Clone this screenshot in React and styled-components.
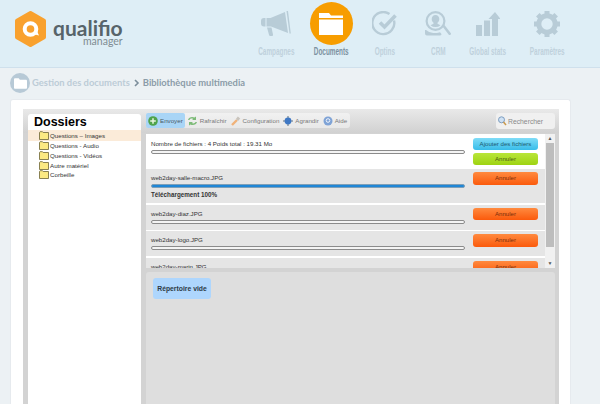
import styled, { createGlobalStyle } from "styled-components";

const GlobalStyle = createGlobalStyle`
  html, body { margin: 0; padding: 0; background: #ecf1f4; }
  body { width: 600px; height: 404px; overflow: hidden; font-family: "Liberation Sans", Arial, sans-serif; }
`;

const navItems = [
  { label: "Campagnes", width: 66, icon: <Megaphone /> },
  { label: "Documents", width: 44, active: true, icon: <FolderBig /> },
  { label: "Optins", width: 64, icon: <CheckRound /> },
  { label: "CRM", width: 42, icon: <PersonSearch /> },
  { label: "Global stats", width: 58, icon: <Stats /> },
  { label: "Paramètres", width: 60, icon: <Gear /> },
];

const folders = ["Questions – Images", "Questions - Audio", "Questions - Vidéos", "Autre matériel", "Corbeille"];

const uploads = [
  { name: "web2day-diaz.JPG" },
  { name: "web2day-logo.JPG" },
  { name: "web2day-marin.JPG" },
];

export default function App() {
  return (
    <Page>
      <GlobalStyle />
      <Header>
        <Logo />
        <Nav>
          {navItems.map((item) => (
            <NavItem key={item.label} $width={item.width}>
              <NavIcon $active={item.active}>{item.icon}</NavIcon>
              <NavLabel $active={item.active}>{item.label}</NavLabel>
            </NavItem>
          ))}
        </Nav>
      </Header>

      <Breadcrumb>
        <CrumbBadge>
          <svg width="13" height="11" viewBox="0 0 13 11">
            <path d="M0 1.500C0 .7.5.3 1.200.3h3.500l1.200 1.400h5.900c.7 0 1.200.4 1.200 1.100v6.900c0 .7-.5 1.100-1.200 1.100H1.200C.5 10.800 0 10.400 0 9.700z" fill="#fff" />
          </svg>
        </CrumbBadge>
        <CrumbLink>Gestion des documents</CrumbLink>
        <CrumbArrow>
          <svg width="6" height="8" viewBox="0 0 6 8" fill="none">
            <path d="M1 1l3 3-3 3" stroke="#7c8e9b" strokeWidth="1.600" />
          </svg>
        </CrumbArrow>
        <CrumbCurrent>Bibliothèque multimedia</CrumbCurrent>
      </Breadcrumb>

      <Card>
        <Manager>
          <Sidebar>
            <SidebarTitle>Dossiers</SidebarTitle>
            {folders.map((name, i) => (
              <TreeRow key={name} $selected={i === 0}>
                <SmallFolder />
                {name}
              </TreeRow>
            ))}
          </Sidebar>

          <Content>
            <Toolbar>
              <ToolGroup>
                <ToolButton $active><PlusIcon />Envoyer</ToolButton>
                <ToolButton><RefreshIcon />Rafraîchir</ToolButton>
                <ToolButton><ToolIcon />Configuration</ToolButton>
                <ToolButton><GlobeIcon />Agrandir</ToolButton>
                <ToolButton><HelpIcon />Aide</ToolButton>
              </ToolGroup>
              <SearchBox><LensIcon />Rechercher</SearchBox>
            </Toolbar>

            <UploadPanel>
              <UploadList>
                <SummaryRow>
                  <RowMain>
                    <FileName>Nombre de fichiers : 4 Poids total : 19.31 Mo</FileName>
                    <Progress />
                  </RowMain>
                  <RowActions>
                    <ActionButton $kind="blue">Ajouter des fichiers</ActionButton>
                    <ActionButton $kind="green">Annuler</ActionButton>
                  </RowActions>
                </SummaryRow>
                <DoneRow>
                  <RowMain>
                    <FileName>web2day-salle-macro.JPG</FileName>
                    <Progress $value={100} />
                    <DoneText>Téléchargement 100%</DoneText>
                  </RowMain>
                  <RowActions>
                    <ActionButton $kind="orange">Annuler</ActionButton>
                  </RowActions>
                </DoneRow>
                {uploads.map((file) => (
                  <FileRow key={file.name}>
                    <RowMain>
                      <FileName>{file.name}</FileName>
                      <Progress />
                    </RowMain>
                    <RowActions>
                      <ActionButton $kind="orange">Annuler</ActionButton>
                    </RowActions>
                  </FileRow>
                ))}
              </UploadList>
              <Scrollbar>
                <ScrollArrow>▲</ScrollArrow>
                <ScrollThumb />
                <ScrollArrow>▼</ScrollArrow>
              </Scrollbar>
            </UploadPanel>

            <Drop>
              <EmptyNote>Répertoire vide</EmptyNote>
            </Drop>
          </Content>
        </Manager>
      </Card>
    </Page>
  );
}

function Logo() {
  return (
    <LogoWrap>
      <svg width="33" height="38" viewBox="0 0 33 38">
        <path d="M16.500 3 30 10.800v16.400L16.500 35 3 27.200V10.800z" fill="#f9a12e" stroke="#f9a12e" strokeWidth="4" strokeLinejoin="round" />
        <circle cx="16.500" cy="19" r="5.800" fill="none" stroke="#fff" strokeWidth="4" />
        <path d="M19 24l6 1.500-2.500-5.500z" fill="#fff" />
      </svg>
      <LogoText>
        <LogoName>qualifio</LogoName>
        <LogoSub>manager</LogoSub>
      </LogoText>
    </LogoWrap>
  );
}

function Megaphone() {
  return (
    <svg width="30" height="26" viewBox="0 0 30 26" fill="#b8ccd7">
      <path d="M0 10c0-2 1-3 3-3h1.500v8.500H3c-2 0-3-1-3-3z" />
      <path d="M5.500 7h4L24 1l3 21-17-6.500H5.500z" />
      <path d="M6 16.500h4.500L12 23.500c.2 1-.5 1.500-1.300 1.500H9.500c-.8 0-1.300-.5-1.500-1.300z" />
      <path d="M25.500 0H27l2.800 22.500h-1.300z" />
    </svg>
  );
}

function FolderBig() {
  return (
    <svg width="24" height="24" viewBox="0 0 24 24">
      <path d="M0 1h10l2 2.500h12V6H0z" fill="#fff" />
      <path d="M0 7.500h24V23H0z" fill="#fff" />
    </svg>
  );
}

function CheckRound() {
  return (
    <svg width="26" height="26" viewBox="0 0 26 26" fill="none">
      <path d="M22 9.500A11 11 0 1 1 17.500 3" stroke="#b8ccd7" strokeWidth="2.400" />
      <path d="M8 11.500l4.500 4.500L23.500 4.500" stroke="#b8ccd7" strokeWidth="3.600" />
    </svg>
  );
}

function PersonSearch() {
  return (
    <svg width="26" height="26" viewBox="0 0 26 26" fill="#b8ccd7">
      <path d="M10.500 0a10 10 0 1 0 0 20 10 10 0 0 0 0-20zm0 2.200a7.800 7.800 0 1 1 0 15.600 7.800 7.800 0 0 1 0-15.600z" />
      <path d="M10.500 4c2.400 0 3.800 1.800 3.800 4 0 1.600-.8 3-1.800 3.800v1l3 1.400a7.500 7.500 0 0 1-10 0l3-1.400v-1C7.500 11 6.700 9.600 6.700 8c0-2.200 1.400-4 3.800-4z" />
      <path d="M17.500 15.500l2-1.500 6.200 8c.5.700.4 1.300-.3 1.800-.7.500-1.300.4-1.800-.2z" />
      <path d="M0 19c1 0 2 .3 2.500 1 2 1.500 5 2 8 2 2 0 3.500-.3 4.500-.8l1.500 1.800c0 1-1 1.500-2.500 1.500H2c-1.500 0-2-1-2-2.500z" />
    </svg>
  );
}

function Stats() {
  return (
    <svg width="24" height="24" viewBox="0 0 24 24" fill="#b8ccd7">
      <path d="M0 13h6v11H0z" />
      <path d="M8 8.500h6V24H8z" />
      <path d="M16 24V7h-3.500L19 0l5.500 7H22v17z" />
    </svg>
  );
}

function Gear() {
  return (
    <svg width="26" height="26" viewBox="0 0 26 26" fill="none">
      <circle cx="13" cy="13" r="8.200" stroke="#b8ccd7" strokeWidth="5" />
      <g stroke="#b8ccd7" strokeWidth="5">
        <path d="M13 0v4M13 22v4M0 13h4M22 13h4M3.800 3.800l2.800 2.800M19.400 19.400l2.800 2.800M3.800 22.200l2.800-2.800M19.400 6.600l2.800-2.800" />
      </g>
    </svg>
  );
}

function SmallFolder() {
  return (
    <TreeIcon width="10" height="9" viewBox="0 0 10 9">
      <path d="M.5 8.500v-7l.6-.8h2.400l.7.8h5.300v7z" fill="#fbe983" stroke="#6b6336" strokeWidth=".8" />
    </TreeIcon>
  );
}

function PlusIcon() {
  return (
    <svg width="10" height="10" viewBox="0 0 10 10">
      <circle cx="5" cy="5" r="4.800" fill="#4fa34c" />
      <path d="M5 2.200v5.600M2.200 5h5.600" stroke="#e9f5e0" strokeWidth="1.500" />
    </svg>
  );
}

function RefreshIcon() {
  return (
    <svg width="11" height="10" viewBox="0 0 11 10" fill="#7dbb78">
      <path d="M1 4c.5-2.500 4-4 6.500-2.500L9 .5v3.500H5l1.200-1C4.800 2.200 3 2.700 2.500 4z" />
      <path d="M10 6c-.5 2.500-4 4-6.500 2.500L2 9.500V6h4L4.800 7c1.400.8 3.200.3 3.700-1z" />
    </svg>
  );
}

function ToolIcon() {
  return (
    <svg width="10" height="10" viewBox="0 0 10 10">
      <path d="M1 9l5-5" stroke="#f0b27a" strokeWidth="2.400" />
      <path d="M6 4l2-2.500" stroke="#c9c4bd" strokeWidth="3" />
    </svg>
  );
}

function GlobeIcon() {
  return (
    <svg width="10" height="10" viewBox="0 0 10 10">
      <path d="M5 0v10M0 5h10" stroke="#5f7180" strokeWidth="1" />
      <circle cx="5" cy="5" r="3.400" fill="#3f78c4" />
    </svg>
  );
}

function HelpIcon() {
  return (
    <svg width="10" height="10" viewBox="0 0 10 10">
      <circle cx="5" cy="5" r="4.500" fill="#7fa3d6" />
      <circle cx="5" cy="4.500" r="1.800" fill="none" stroke="#eef3fb" strokeWidth="1" />
    </svg>
  );
}

function LensIcon() {
  return (
    <svg width="9" height="10" viewBox="0 0 9 10" fill="none">
      <circle cx="3.500" cy="3.800" r="3" fill="#cfe1f3" stroke="#7d9dbf" />
      <path d="M5.500 6l2.500 3" stroke="#c99a4e" strokeWidth="1.500" />
    </svg>
  );
}

const Page = styled.div`
  width: 600px;
  height: 404px;
  overflow: hidden;
  display: flex;
  flex-direction: column;
  background: #ecf1f4;
`;

const Header = styled.header`
  height: 67px;
  flex: none;
  display: flex;
  justify-content: space-between;
  background: #deeef6;
  border-bottom: 1px solid #cfe0ec;
`;

const LogoWrap = styled.div`
  display: flex;
  align-items: flex-start;
  gap: 6px;
  padding: 10px 0 0 14px;
`;

const LogoText = styled.div`
  display: flex;
  flex-direction: column;
  align-items: flex-end;
  padding-top: 9px;
`;

const LogoName = styled.span`
  font-family: Lato, sans-serif;
  font-size: 21px;
  line-height: 17px;
  font-weight: 700;
  color: #57646a;
`;

const LogoSub = styled.span`
  font-family: Lato, sans-serif;
  font-size: 10.500px;
  line-height: 10px;
  color: #7f8c92;
`;

const Nav = styled.nav`
  display: flex;
  padding: 2px 23px 0 0;
`;

const NavItem = styled.div`
  width: ${(p) => p.$width}px;
  display: flex;
  flex-direction: column;
  align-items: center;
`;

const NavIcon = styled.div`
  width: 43px;
  height: 43px;
  flex: none;
  display: flex;
  align-items: center;
  justify-content: center;
  border-radius: 50%;
  background: ${(p) => (p.$active ? "#f79d00" : "transparent")};
`;

const NavLabel = styled.span`
  margin-top: 1px;
  font-family: "Liberation Sans", sans-serif;
  font-size: 10px;
  line-height: 12px;
  font-weight: 700;
  white-space: nowrap;
  transform: scaleX(0.64);
  color: ${(p) => (p.$active ? "#7c91a1" : "#bfd1dc")};
`;

const Breadcrumb = styled.div`
  height: 31px;
  flex: none;
  display: flex;
  align-items: center;
  padding: 0 0 1px 10px;
  box-sizing: border-box;
  font-family: Lato, sans-serif;
  font-weight: 700;
`;

const CrumbBadge = styled.span`
  width: 20px;
  height: 20px;
  margin-right: 2px;
  display: flex;
  align-items: center;
  justify-content: center;
  border-radius: 50%;
  background: #b7c9d6;
`;

const CrumbLink = styled.span`
  margin-bottom: 1px;
  font-size: 9.400px;
  color: #bcccd7;
`;

const CrumbArrow = styled.span`
  margin: 0 3px 0 4px;
  display: flex;
`;

const CrumbCurrent = styled.span`
  margin-bottom: 1px;
  font-size: 9.400px;
  color: #8b9ca8;
`;

const Card = styled.main`
  width: 561px;
  flex: 1;
  margin-left: 10px;
  padding: 9px 11px 0 12px;
  background: #fff;
  border: 1px solid #e6eaee;
  border-bottom: none;
  border-radius: 3px 3px 0 0;
  box-sizing: border-box;
`;

const Manager = styled.div`
  height: 100%;
  display: flex;
  gap: 5px;
  padding: 5px 4px 0 5px;
  background: linear-gradient(#e9e9e9, #d1d1d1 24px, #d3d3d3 24px);
`;

const Sidebar = styled.aside`
  width: 113px;
  flex: none;
  background: #fff;
  border-radius: 3px 3px 0 0;
`;

const SidebarTitle = styled.h2`
  margin: 0;
  padding-left: 6px;
  height: 16px;
  font-size: 12.500px;
  line-height: 16px;
  font-weight: 700;
  color: #000;
`;

const TreeRow = styled.div`
  height: 9.700px;
  display: flex;
  align-items: center;
  padding-left: 11px;
  font-size: 6.200px;
  color: #333;
  white-space: nowrap;
  background: ${(p) => (p.$selected ? "#fbebd9" : "transparent")};
  &:first-of-type {
    height: 11px;
  }
`;

const TreeIcon = styled.svg`
  flex: none;
  margin-right: 1px;
`;

const Content = styled.section`
  flex: 1;
  min-width: 0;
  display: flex;
  flex-direction: column;
  margin-top: -5px;
`;

const Toolbar = styled.div`
  height: 25px;
  flex: none;
  display: flex;
  align-items: flex-start;
  justify-content: space-between;
  padding-top: 4px;
  box-sizing: border-box;
`;

const ToolGroup = styled.div`
  width: 204px;
  display: flex;
  justify-content: space-between;
  padding: 0 3px 0 0;
  box-sizing: border-box;
  height: 15px;
  background: rgba(255, 255, 255, 0.45);
  border-radius: 3px;
`;

const ToolButton = styled.div`
  display: flex;
  align-items: center;
  gap: 2px;
  padding: 0 2px;
  font-size: 6.200px;
  white-space: nowrap;
  color: ${(p) => (p.$active ? "#4a5a66" : "#7a7a7a")};
  background: ${(p) => (p.$active ? "#a9d5f6" : "transparent")};
  border-radius: 2px;
`;

const SearchBox = styled.div`
  width: 59px;
  height: 16px;
  display: flex;
  align-items: center;
  gap: 1px;
  padding-left: 2px;
  box-sizing: border-box;
  font-size: 6.800px;
  color: #8a8a8a;
  background: #f0f0f0;
  border-radius: 3px;
`;

const UploadPanel = styled.div`
  height: 134px;
  flex: none;
  display: flex;
  background: #fff;
  overflow: hidden;
`;

const UploadList = styled.div`
  flex: 1;
  min-width: 0;
  overflow: hidden;
`;

const Row = styled.div`
  display: flex;
  gap: 8px;
  padding-left: 5px;
  padding-right: 7px;
  box-sizing: border-box;
`;

const SummaryRow = styled(Row)`
  height: 35px;
  padding-top: 3.500px;
`;

const DoneRow = styled(Row)`
  height: 34px;
  padding-top: 3.300px;
  background: #e5e5e5;
`;

const FileRow = styled(Row)`
  height: 25px;
  margin-top: 1.500px;
  padding-top: 3.300px;
  background: #e5e5e5;
`;

const RowMain = styled.div`
  flex: 1;
  min-width: 0;
`;

const RowActions = styled.div`
  width: 65px;
  flex: none;
  display: flex;
  flex-direction: column;
  gap: 2.500px;
`;

const FileName = styled.div`
  height: 11px;
  font-size: 6.150px;
  line-height: 11px;
  color: #333;
  white-space: nowrap;
`;

const Progress = styled.div`
  height: 4px;
  margin-top: 1px;
  box-sizing: border-box;
  border-radius: 2px;
  border: 1px solid ${(p) => (p.$value ? "#7d9fb8" : "#8b8b8b")};
  background: ${(p) => (p.$value ? "#1f86d6" : "#f4f4f4")};
`;

const DoneText = styled.div`
  margin-top: 2px;
  font-size: 6.300px;
  line-height: 9px;
  font-weight: 700;
  color: #333;
`;

const buttonStyles = {
  blue: { bg: "linear-gradient(#7fdcf7, #38bdea)", color: "#1d5a70" },
  green: { bg: "linear-gradient(#b9e63a, #9ed312)", color: "#4c5e18" },
  orange: { bg: "linear-gradient(#ff8a3f, #fb5a0c)", color: "#7c2f0c" },
};

const ActionButton = styled.div`
  height: 12.500px;
  flex: none;
  font-size: 6.100px;
  line-height: 12.500px;
  text-align: center;
  white-space: nowrap;
  color: ${(p) => buttonStyles[p.$kind].color};
  border-radius: 3px;
  background: ${(p) => buttonStyles[p.$kind].bg};
`;

const Scrollbar = styled.div`
  width: 10px;
  flex: none;
  display: flex;
  flex-direction: column;
  background: #f1f1f1;
`;

const ScrollArrow = styled.div`
  height: 9px;
  flex: none;
  font-size: 5px;
  line-height: 9px;
  text-align: center;
  color: #555;
`;

const ScrollThumb = styled.div`
  flex: 1;
  margin: 0 1px 12px;
  background: #bdbdbd;
`;

const Drop = styled.div`
  flex: 1;
  margin-top: 4px;
  padding: 6px 7px;
  background: #dedede;
  border-radius: 3px 3px 0 0;
`;

const EmptyNote = styled.div`
  width: 58px;
  height: 21px;
  font-size: 6.800px;
  font-weight: 700;
  line-height: 21px;
  text-align: center;
  color: #2d3a46;
  background: #aed6fd;
  border-radius: 3px;
`;
